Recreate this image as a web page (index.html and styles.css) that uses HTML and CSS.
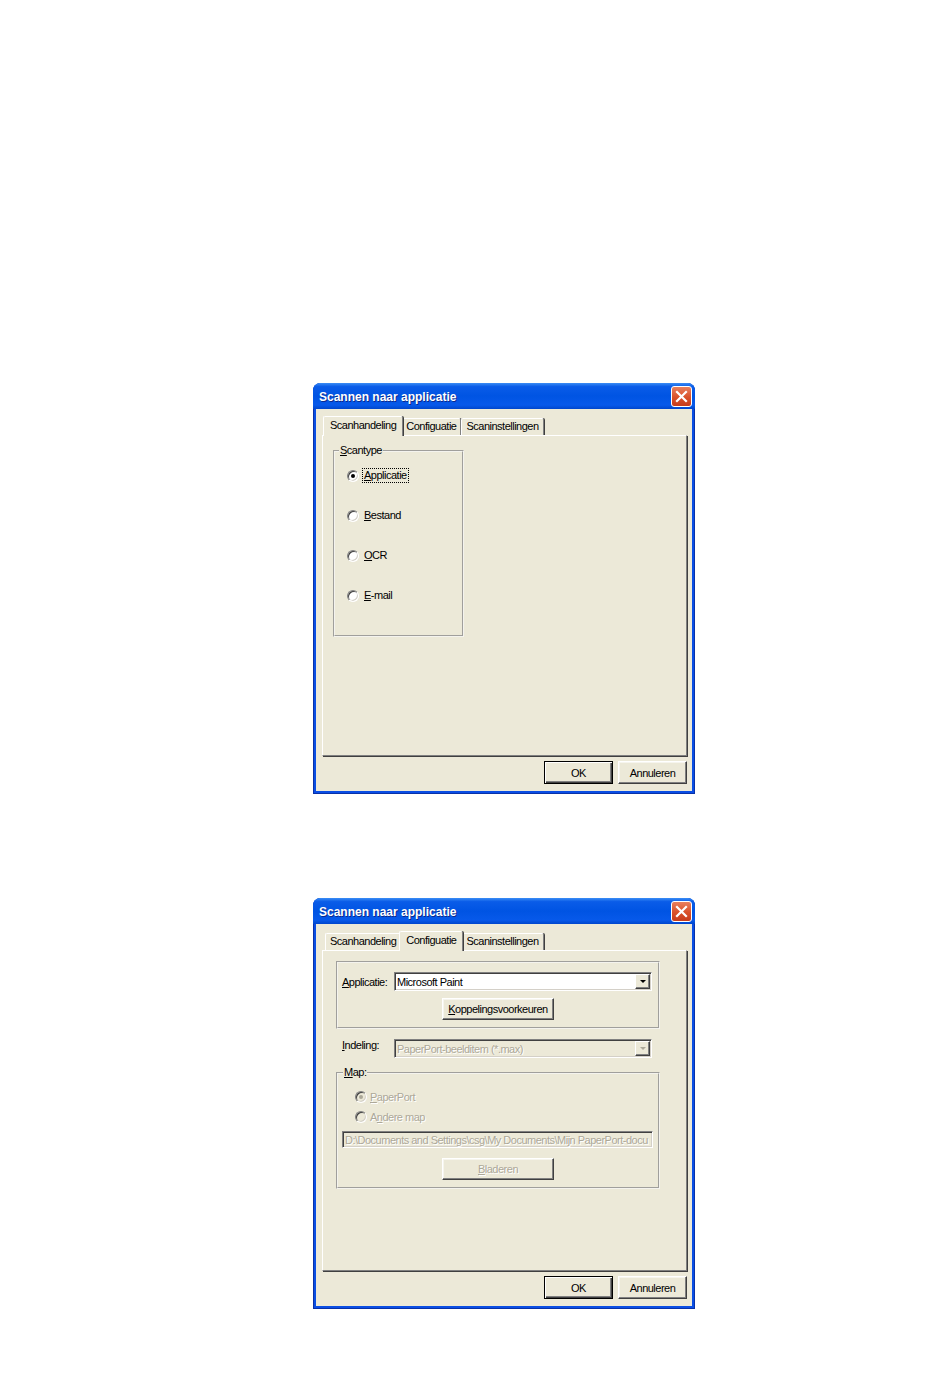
FILE: index.html
```html
<!DOCTYPE html>
<html lang="nl">
<head>
    <meta charset="UTF-8">
    <title>Scannen naar applicatie</title>
    <link rel="stylesheet" href="styles.css">
</head>
<body>
<div class="page">

    <!-- Dialog 1: Scanhandeling tab -->
    <div class="window">
        <div class="titlebar">
            <span class="title">Scannen naar applicatie</span>
            <span class="close">
                <svg width="19" height="19" viewBox="0 0 19 19"><path d="M5 5 L14 14 M14 5 L5 14" stroke="#fff" stroke-width="2.2" stroke-linecap="square"/></svg>
            </span>
        </div>
        <div class="client">
            <div class="tabs">
                <span class="tab active">Scanhandeling</span>
                <span class="tab">Configuatie</span>
                <span class="tab">Scaninstellingen</span>
            </div>
            <div class="panel panel-scan">
                <fieldset class="group scantype">
                    <legend><u>S</u>cantype</legend>
                    <div class="radio-list">
                        <label class="radio-row"><span class="radio checked"></span><span class="focus"><u>A</u>pplicatie</span></label>
                        <label class="radio-row"><span class="radio"></span><span class="nofocus"><u>B</u>estand</span></label>
                        <label class="radio-row"><span class="radio"></span><span class="nofocus"><u>O</u>CR</span></label>
                        <label class="radio-row"><span class="radio"></span><span class="nofocus"><u>E</u>-mail</span></label>
                    </div>
                </fieldset>
            </div>
            <div class="buttons">
                <button class="btn default">OK</button>
                <button class="btn">Annuleren</button>
            </div>
        </div>
    </div>

    <!-- Dialog 2: Configuatie tab -->
    <div class="window">
        <div class="titlebar">
            <span class="title">Scannen naar applicatie</span>
            <span class="close">
                <svg width="19" height="19" viewBox="0 0 19 19"><path d="M5 5 L14 14 M14 5 L5 14" stroke="#fff" stroke-width="2.2" stroke-linecap="square"/></svg>
            </span>
        </div>
        <div class="client">
            <div class="tabs">
                <span class="tab">Scanhandeling</span>
                <span class="tab active">Configuatie</span>
                <span class="tab">Scaninstellingen</span>
            </div>
            <div class="panel panel-config">
                <div class="config">
                    <div class="group app-group">
                        <div class="field-row">
                            <span class="field-label"><u>A</u>pplicatie:</span>
                            <div class="combo">
                                <span class="combo-text">Microsoft Paint</span>
                                <span class="combo-arrow"><span class="triangle"></span></span>
                            </div>
                        </div>
                        <button class="btn wide"><u>K</u>oppelingsvoorkeuren</button>
                    </div>

                    <div class="field-row indeling">
                        <span class="field-label"><u>I</u>ndeling:</span>
                        <div class="combo disabled">
                            <span class="combo-text">PaperPort-beelditem (*.max)</span>
                            <span class="combo-arrow"><span class="triangle"></span></span>
                        </div>
                    </div>

                    <fieldset class="group map">
                        <legend><u>M</u>ap:</legend>
                        <div class="map-radios">
                            <label class="radio-row disabled"><span class="radio checked"></span><span><u>P</u>aperPort</span></label>
                            <label class="radio-row disabled"><span class="radio"></span><span>A<u>n</u>dere map</span></label>
                        </div>
                        <div class="textbox disabled">D:\Documents and Settings\csg\My Documents\Mijn PaperPort-docu</div>
                        <button class="btn wide disabled"><u>B</u>laderen</button>
                    </fieldset>
                </div>
            </div>
            <div class="buttons">
                <button class="btn default">OK</button>
                <button class="btn">Annuleren</button>
            </div>
        </div>
    </div>

</div>
</body>
</html>
```

FILE: styles.css
```css
body {
    margin: 0;
    background-color: #fff;
    font-family: "Liberation Sans", Arial, sans-serif;
    font-size: 11px;
    letter-spacing: -0.5px;
    color: #000;
}

.page {
    display: flex;
    flex-direction: column;
    gap: 104px;
    padding: 383px 0 0 313px;
}

/* XP window frame */
.window {
    width: 382px;
    height: 411px;
    box-sizing: border-box;
    display: flex;
    flex-direction: column;
    padding: 0 3px 3px;
    background-color: #0a4ee4;
    border-radius: 8px 8px 0 0;
    box-shadow: inset 1px 0 #0831a8, inset -1px 0 #0831a8, inset 0 -1px #0831a8;
}

.titlebar {
    margin: 0 -3px;
    height: 26px;
    flex: none;
    display: flex;
    align-items: center;
    justify-content: space-between;
    padding: 1px 3px 0 6px;
    box-sizing: border-box;
    border-radius: 7px 7px 0 0;
    background: linear-gradient(to bottom, #3b8df5 0%, #0a5ce8 14%, #0054e3 50%, #0759ea 85%, #0046cc 100%);
}

.title {
    color: #fff;
    font-weight: bold;
    font-size: 12px;
    letter-spacing: 0;
    text-shadow: 1px 1px #0d2a8c;
}

.close {
    width: 21px;
    height: 21px;
    box-sizing: border-box;
    border: 1px solid #fff;
    border-radius: 3px;
    background: linear-gradient(to bottom, #e8805f, #d9512a 55%, #c63c1c);
    display: flex;
    align-items: center;
    justify-content: center;
}

.close svg {
    display: block;
}

.client {
    flex: 1;
    display: flex;
    flex-direction: column;
    padding: 7px 5px 7px 6px;
    background-color: #ece9d8;
}

/* tabs */
.tabs {
    display: flex;
    align-items: flex-end;
    height: 19px;
    padding-left: 3px;
    position: relative;
    z-index: 1;
}

.tab {
    height: 17px;
    line-height: 15px;
    padding: 0 4px;
    box-sizing: border-box;
    border-top: 1px solid #fff;
    border-left: 1px solid #fff;
    border-right: 1px solid #808080;
    box-shadow: 1px 0 #404040;
    border-radius: 2px 2px 0 0;
    background-color: #ece9d8;
    white-space: nowrap;
}

.tab.active {
    height: 20px;
    line-height: 16px;
    margin: 0 -2px -1px;
    padding: 0 6px;
    position: relative;
    z-index: 2;
}

.panel {
    flex: 1;
    border: 1px solid;
    border-color: #fff #808080 #808080 #fff;
    box-shadow: 1px 1px #404040;
    margin-bottom: 5px;
}

.panel-scan {
    padding: 8px 0 0 10px;
}

.panel-config {
    padding: 10px 0 0 13px;
}

/* group boxes */
.group {
    margin: 0;
    box-sizing: border-box;
    min-width: 0;
    border: 2px groove #f4f3ee;
}

fieldset.group {
    padding: 0;
}

.group legend {
    margin-left: 4px;
    padding: 0 1px;
    line-height: 13px;
}

.scantype {
    width: 131px;
    height: 193px;
}

.radio-list {
    display: flex;
    flex-direction: column;
    gap: 25px;
    padding: 11px 0 0 12px;
}

.radio-row {
    display: flex;
    align-items: center;
    gap: 3px;
    height: 15px;
}

.radio {
    width: 12px;
    height: 12px;
    flex: none;
    box-sizing: border-box;
    border-radius: 50%;
    border: 1px solid;
    border-color: #808080 #fff #fff #808080;
    box-shadow: inset 1px 1px #404040, inset -1px -1px #d4d0c8;
    background-color: #fff;
    position: relative;
}

.radio.checked::after {
    content: "";
    position: absolute;
    left: 3px;
    top: 3px;
    width: 4px;
    height: 4px;
    border-radius: 50%;
    background-color: #000;
}

.disabled .radio {
    background-color: #ece9d8;
}

.disabled .radio.checked::after {
    background-color: #aca899;
}

.focus,
.nofocus {
    padding: 0 1px;
    line-height: 13px;
    border: 1px dotted transparent;
}

.focus {
    border-color: #000;
}

/* buttons */
.buttons {
    display: flex;
    justify-content: flex-end;
    gap: 5px;
}

.btn {
    width: 69px;
    height: 23px;
    box-sizing: border-box;
    padding: 0;
    border: 1px solid;
    border-color: #fff #404040 #404040 #fff;
    box-shadow: inset -1px -1px #808080, inset 1px 1px #f6f5ee;
    background-color: #ece9d8;
    font: inherit;
    letter-spacing: inherit;
    color: #000;
}

.btn.default {
    border-color: #000;
    box-shadow: inset 1px 1px #fff, inset -1px -1px #404040, inset -2px -2px #808080;
}

.btn.wide {
    width: 112px;
    height: 22px;
    align-self: center;
}

.btn.disabled,
.disabled {
    color: #aca899;
    text-shadow: 1px 1px #fff;
}

/* config tab */
.config {
    width: 324px;
    display: flex;
    flex-direction: column;
}

.app-group {
    height: 68px;
    display: flex;
    flex-direction: column;
    padding: 9px 4px 0;
}

.field-row {
    display: flex;
    align-items: center;
}

.field-label {
    width: 52px;
    flex: none;
}

.combo {
    width: 258px;
    height: 19px;
    box-sizing: border-box;
    display: flex;
    align-items: center;
    border: 1px solid;
    border-color: #808080 #fff #fff #808080;
    box-shadow: inset 1px 1px #404040, inset -1px -1px #d4d0c8;
    background-color: #fff;
    padding: 1px 1px 1px 2px;
}

.combo.disabled {
    background-color: #ece9d8;
}

.combo-text {
    flex: 1;
    white-space: nowrap;
    overflow: hidden;
}

.combo-arrow {
    width: 15px;
    height: 15px;
    box-sizing: border-box;
    display: flex;
    align-items: center;
    justify-content: center;
    border: 1px solid;
    border-color: #fff #404040 #404040 #fff;
    box-shadow: inset -1px -1px #808080;
    background-color: #ece9d8;
}

.triangle {
    width: 0;
    height: 0;
    border-left: 3px solid transparent;
    border-right: 3px solid transparent;
    border-top: 3px solid #000;
}

.disabled .triangle {
    border-top-color: #aca899;
}

.app-group .btn.wide {
    margin-top: 7px;
}

.indeling {
    margin-top: 10px;
    padding-left: 6px;
    align-items: flex-start;
}

.indeling .field-label {
    line-height: 13px;
}

.map {
    margin-top: 8px;
    height: 123px;
    display: flex;
    flex-direction: column;
}

.map legend {
    margin-left: 5px;
}

.map-radios {
    display: flex;
    flex-direction: column;
    gap: 5px;
    padding: 10px 0 0 17px;
}

.textbox {
    margin: 7px 0 0 4px;
    width: 311px;
    height: 17px;
    box-sizing: border-box;
    border: 1px solid;
    border-color: #808080 #fff #fff #808080;
    box-shadow: inset 1px 1px #404040, inset -1px -1px #d4d0c8;
    padding: 2px 2px 0;
    line-height: 12px;
    white-space: nowrap;
    overflow: hidden;
}

.map .btn.wide {
    margin-top: 10px;
}
```
